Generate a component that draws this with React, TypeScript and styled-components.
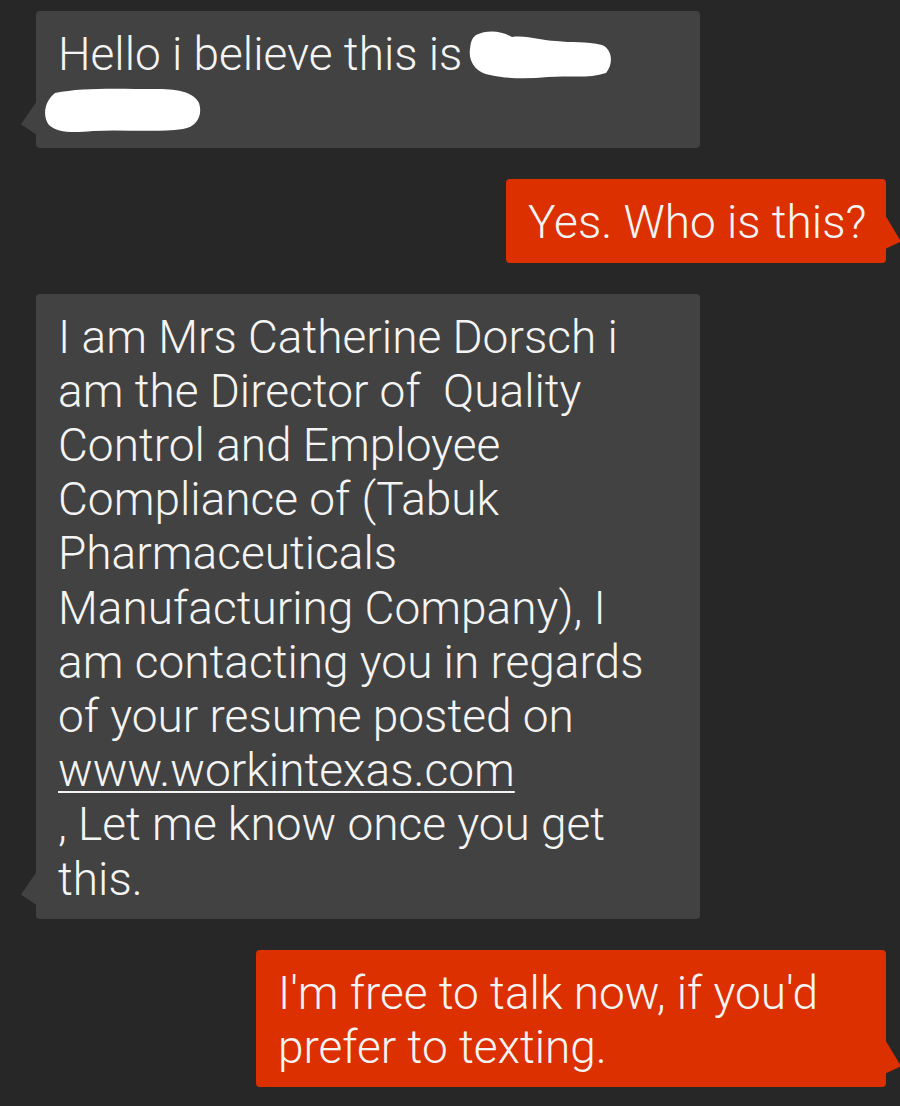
import styled, { createGlobalStyle } from 'styled-components';

const GlobalStyle = createGlobalStyle`
  html, body {
    margin: 0;
    padding: 0;
    background: #272727;
  }
  body {
    font-family: Roboto, 'Liberation Sans', sans-serif;
  }
`;

type Side = 'in' | 'out';

const Blob = ({ w, h, d, shift = 0 }: { w: number; h: number; d: string; shift?: number }) => (
  <BlobSvg width={w} height={h} viewBox={`0 0 ${w} ${h}`} style={{ marginLeft: shift }}>
    <path d={d} fill="#ffffff" />
  </BlobSvg>
);

const App = () => {
  return (
    <>
      <GlobalStyle />
      <Thread>
        <Bubble side="in" width={664}>
          Hello i believe this is
          <Blob
            w={144}
            h={50}
            shift={6}
            d="M8 6 C20 0 34 2 44 8 C60 6 74 12 88 12 C104 14 118 12 134 16 C144 20 146 34 138 44 C120 50 100 46 80 48 C60 50 40 50 22 46 C8 44 0 32 2 20 C3 12 4 9 8 6 Z"
          />
          <br />
          <Blob
            w={158}
            h={46}
            shift={-15}
            d="M12 6 C40 0 80 2 112 2 C132 2 150 4 156 16 C160 28 154 40 140 42 C110 46 80 42 50 44 C30 46 14 46 6 38 C0 30 0 16 12 6 Z"
          />
        </Bubble>

        <Bubble side="out" width={380}>
          Yes. Who is this?
        </Bubble>

        <Bubble side="in" width={664}>
          I am Mrs Catherine Dorsch i<br />
          am the Director of&nbsp; Quality<br />
          Control and Employee<br />
          Compliance of (Tabuk<br />
          Pharmaceuticals<br />
          Manufacturing Company), I<br />
          am contacting you in regards<br />
          of your resume posted on<br />
          <Link>www.workintexas.com</Link>
          <br />, Let me know once you get<br />
          this.
        </Bubble>

        <Bubble side="out" width={630}>
          I'm free to talk now, if you'd<br />
          prefer to texting.
        </Bubble>
      </Thread>
    </>
  );
};

export default App;

const Thread = styled.main`
  display: flex;
  flex-direction: column;
  gap: 31px;
  padding: 11px 14px 21px 36px;
  box-sizing: border-box;
  width: 900px;
  min-height: 1106px;
`;

const Bubble = styled.div<{ side: Side; width: number }>`
  position: relative;
  box-sizing: border-box;
  width: ${(p) => p.width}px;
  align-self: ${(p) => (p.side === 'in' ? 'flex-start' : 'flex-end')};
  padding: 16px 22px 13px 22px;
  border-radius: 4px;
  background: ${(p) => (p.side === 'in' ? '#424242' : '#dc3000')};
  color: #f4f4f4;
  font-size: 46px;
  font-weight: 300;
  line-height: 54.2px;
  white-space: nowrap;

  &::after {
    content: '';
    position: absolute;
    width: 15px;
    height: 32px;
    bottom: 14px;
    ${(p) => (p.side === 'in' ? 'left: -15px;' : 'right: -15px;')}
    background: inherit;
    clip-path: ${(p) =>
      p.side === 'in'
        ? 'polygon(100% 0, 0 68%, 100% 100%)'
        : 'polygon(0 0, 100% 78%, 0 100%)'};
  }
`;

const Link = styled.span`
  text-decoration: underline;
  text-decoration-thickness: 2px;
  text-underline-offset: 5px;
`;

const BlobSvg = styled.svg`
  display: inline-block;
  vertical-align: -9px;
`;
